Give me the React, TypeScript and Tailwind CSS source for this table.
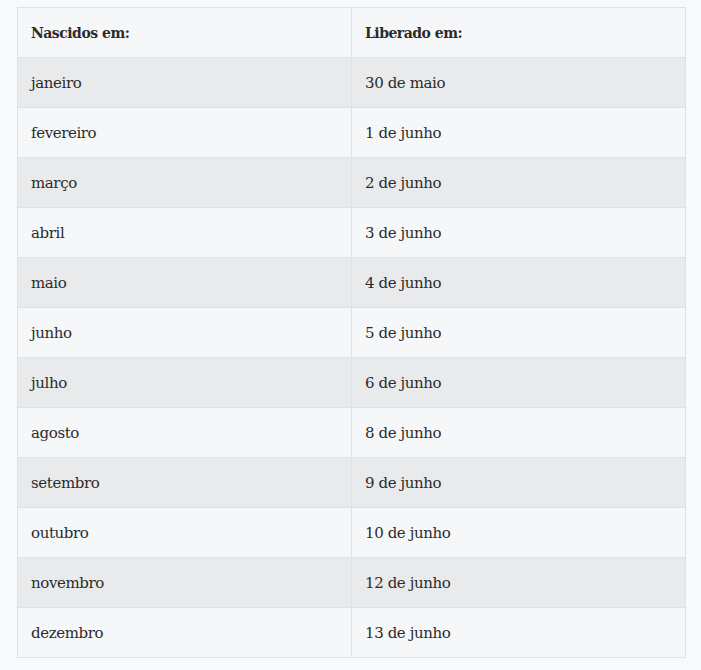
const rows: [string, string][] = [
  ["janeiro", "30 de maio"],
  ["fevereiro", "1 de junho"],
  ["março", "2 de junho"],
  ["abril", "3 de junho"],
  ["maio", "4 de junho"],
  ["junho", "5 de junho"],
  ["julho", "6 de junho"],
  ["agosto", "8 de junho"],
  ["setembro", "9 de junho"],
  ["outubro", "10 de junho"],
  ["novembro", "12 de junho"],
  ["dezembro", "13 de junho"],
];

export default function App() {
  return (
    <div className="min-h-[670px] w-[701px] bg-[#f8f9fa] pt-[7px] pl-[17px] font-['DejaVu_Serif',serif] text-[15px] tracking-[-0.4px] text-[#2b2b2b]">
      <table className="w-[669px] border-collapse border border-[#dfe1e4]">
        <thead>
          <tr className="h-[50px] bg-[#f6f7f9]">
            <th className="w-[334px] border border-[#dfe1e4] px-[13px] pt-[1px] text-left text-[14px] font-bold tracking-[-0.5px]">
              Nascidos em:
            </th>
            <th className="border border-[#dfe1e4] px-[13px] pt-[1px] text-left text-[14px] font-bold tracking-[-0.5px]">
              Liberado em:
            </th>
          </tr>
        </thead>
        <tbody>
          {rows.map(([a, b], i) => (
            <tr
              key={a}
              className={
                i % 2 === 0 ? "h-[50px] bg-[#e9eaec]" : "h-[50px] bg-[#f6f7f9]"
              }
            >
              <td className="border border-[#dfe1e4] px-[13px] pt-[2px]">{a}</td>
              <td className="border border-[#dfe1e4] px-[13px] pt-[2px]">{b}</td>
            </tr>
          ))}
        </tbody>
      </table>
    </div>
  );
}
